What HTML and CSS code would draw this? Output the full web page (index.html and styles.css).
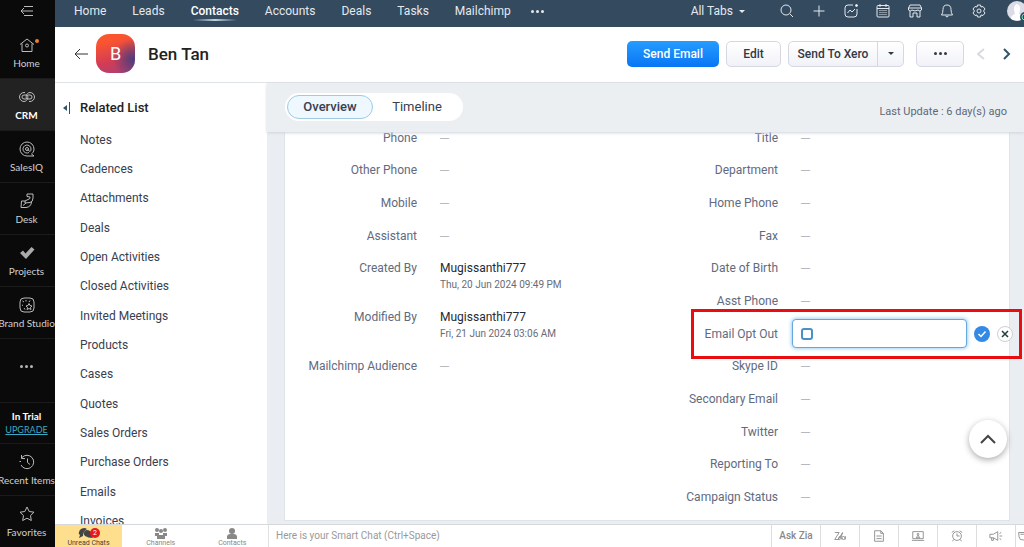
FILE: index.html
```
<!DOCTYPE html>
<html lang="en">
<head>
<meta charset="utf-8">
<title>Ben Tan - Contacts</title>
<link rel="stylesheet" href="styles.css">
</head>
<body>
<div class="app">
  <nav class="rail" aria-label="Applications">
    <button class="rail-toggle" aria-label="Collapse"><svg width="14" height="12" viewBox="0 0 14 12"><path d="M4 1.500H13M1 6H13M4 10.500H13M4 3L1 6L4 9"/></svg></button>
    <a class="rail-item" href="#"><svg width="18" height="18" viewBox="0 0 18 18"><path d="M2 8.500L9 3L16 8.500M4 7.500V15.500H14V7.500"/><circle cx="9" cy="9.500" r="1.500"/><circle class="orange" cx="19" cy="5" r="2"/></svg><span>Home</span></a>
    <a class="rail-item active" href="#"><svg width="18" height="18" viewBox="0 0 18 18"><path d="M7 4.500H6A4.500 4.500 0 0 0 6 13.500C8 13.500 9 12 10 10.500M11 13.500H12A4.500 4.500 0 0 0 12 4.500C10 4.500 9 6 8 7.500"/><rect x="4" y="7" width="6" height="4" rx="2"/><rect x="8" y="7" width="6" height="4" rx="2"/></svg><span>CRM</span></a>
    <a class="rail-item" href="#"><svg width="18" height="18" viewBox="0 0 18 18"><path d="M16 16H9A7 7 0 1 1 16 9C16 12 14.500 13 13.500 14L16 16M11 12.500A4 4 0 1 1 13 9C13 11 12 11.500 12 11.500L9.500 9.500"/><circle cx="9" cy="9" r="1.500"/></svg><span>SalesIQ</span></a>
    <a class="rail-item" href="#"><svg width="18" height="18" viewBox="0 0 18 18"><path d="M9 2H15V6Q15 10 12 10.500L7 11V9H3.500L3 15.500H8Q13 15 13.500 10M9 2V4.500L12 5Q12.500 7 10 7.500L7 9M5 13.500L8 11"/></svg><span>Desk</span></a>
    <a class="rail-item" href="#"><svg class="solid" width="18" height="18" viewBox="0 0 18 18"><path d="M2 9L5 6.500L7.500 9.500L13.500 3L16.500 5.500L8 15Z"/></svg><span>Projects</span></a>
    <a class="rail-item" href="#"><svg width="18" height="18" viewBox="0 0 18 18"><rect x="2" y="2" width="14" height="14" rx="4"/><path d="M4.500 5L6 6M8 4V5.500M12 4.500L11 6M4 9L5 9.500M6 12L7 13.500M11 7.500L12 9.500L14 10L12.500 11.500L13 13.500L11 12.500L9 13.500L9.500 11.500L8 10L10 9.500Z"/></svg><span>Brand Studio</span></a>
    <button class="rail-more" aria-label="More applications"><i></i><i></i><i></i></button>
    <div class="trial"><b>In Trial</b><a href="#">UPGRADE</a></div>
    <a class="rail-item" href="#"><svg width="18" height="18" viewBox="0 0 18 18"><path d="M4 4.500A6.700 6.700 0 1 1 3 12M3.500 2V5.500H7M9.500 5.500V9.500L12 11.500M1.500 8.500H3"/></svg><span>Recent Items</span></a>
    <a class="rail-item" href="#"><svg width="18" height="18" viewBox="0 0 18 18"><path d="M9 2L11.200 6.500L16 7.200L12.500 10.600L13.300 15.500L9 13.200L4.700 15.500L5.500 10.600L2 7.200L6.800 6.500Z"/></svg><span>Favorites</span></a>
  </nav>

  <div class="main">
    <header class="topbar">
      <nav class="tabs" aria-label="Modules">
        <a href="#">Home</a><a href="#">Leads</a><a class="current" href="#">Contacts</a><a href="#">Accounts</a><a href="#">Deals</a><a href="#">Tasks</a><a href="#">Mailchimp</a>
        <button class="dots" aria-label="More modules"><i></i><i></i><i></i></button>
      </nav>
      <div class="tools">
        <button class="all-tabs">All Tabs <i class="caret"></i></button>
        <button aria-label="Search"><svg viewBox="0 0 16 16"><circle cx="7" cy="7" r="5"/><path d="M11 11L14 14"/></svg></button>
        <button aria-label="Create"><svg viewBox="0 0 16 16"><path d="M8 2.500V13.500M2.500 8H13.500"/></svg></button>
        <button aria-label="Analytics"><svg viewBox="0 0 16 16"><path d="M10 2H5Q2 2 2 5V11Q2 14 5 14H11Q14 14 14 11V6M4.500 10L7 7L9 9L12 6"/><circle class="fill" cx="13.500" cy="2.500" r="1"/></svg></button>
        <button aria-label="Calendar"><svg viewBox="0 0 16 16"><rect x="2" y="2.500" width="12" height="11.500" rx="1"/><path d="M2 5.500H14M5 1V4M11 1V4"/><path class="grid-dots" d="M4.500 7.500H12M4.500 9.500H12M4.500 11.500H12"/></svg></button>
        <button aria-label="Marketplace"><svg viewBox="0 0 16 16"><path d="M3 2H13L14.500 5V7Q13 9 11 7Q8 9 5 7Q3 9 1.500 7V5ZM1.500 5H14.500M3 8V14H6V10H10V14H13V8"/></svg></button>
        <button aria-label="Notifications"><svg viewBox="0 0 16 16"><path d="M2.500 12Q4 10 4 6.500Q4 2 8 2Q12 2 12 6.500Q12 10 13.500 12ZM6.500 13Q8 15 9.500 13"/></svg></button>
        <button aria-label="Settings"><svg viewBox="0 0 16 16"><path d="M6.500 2H9.500L10 4L12 3.500L14 6L12.500 8L14 10L12 12.500L10 12L9.500 14H6.500L6 12L4 12.500L2 10L3.500 8L2 6L4 3.500L6 4Z"/><circle cx="8" cy="8" r="2"/></svg></button>
        <button class="profile" aria-label="Profile"><svg viewBox="0 0 20 20"><circle cx="10" cy="10" r="10" fill="#dcdce8"/><path d="M4 18Q4 14 8 13Q5 5 10 3Q15 5 12 13Q16 14 16 18Q10 21 4 18Z" fill="#fff"/><circle cx="18" cy="16" r="5" fill="#344a5e"/><circle cx="18" cy="16" r="3" fill="#18564d" stroke="#75ddb8"/></svg></button>
      </div>
    </header>

    <header class="record">
      <button class="back" aria-label="Back"><svg width="14" height="12" viewBox="0 0 14 12"><path d="M14 6H1M6 1L1 6L6 11"/></svg></button>
      <span class="avatar">B</span>
      <h1>Ben Tan</h1>
      <div class="actions">
        <button class="btn primary">Send Email</button>
        <button class="btn edit">Edit</button>
        <div class="split"><button>Send To Xero</button><button class="drop" aria-label="More send options"><i class="caret"></i></button></div>
        <button class="btn more" aria-label="More actions"><i></i><i></i><i></i></button>
      </div>
      <div class="pager">
        <button aria-label="Previous record" disabled><svg width="8" height="12" viewBox="0 0 8 12"><path d="M7 1L1 6L7 11"/></svg></button>
        <button aria-label="Next record"><svg width="8" height="12" viewBox="0 0 8 12"><path d="M1 1L6 6L1 11"/></svg></button>
      </div>
    </header>

    <div class="workspace">
      <aside class="related">
        <h2><svg width="8" height="14" viewBox="0 0 8 14"><path d="M0 7L4 4V10Z" fill="#31546d" stroke="none"/><path d="M6.500 1V13" stroke="#31546d"/></svg>Related List</h2>
        <a href="#">Notes</a><a href="#">Cadences</a><a href="#">Attachments</a><a href="#">Deals</a><a href="#">Open Activities</a><a href="#">Closed Activities</a><a href="#">Invited Meetings</a><a href="#">Products</a><a href="#">Cases</a><a href="#">Quotes</a><a href="#">Sales Orders</a><a href="#">Purchase Orders</a><a href="#">Emails</a><a href="#">Invoices</a>
      </aside>
      <main class="content">
        <div class="viewbar">
          <div class="switch"><button class="selected">Overview</button><button>Timeline</button></div>
          <p>Last Update : 6 day(s) ago</p>
        </div>
        <div class="scroll">
          <section class="card">
            <dl class="fields">
              <div><dt>Phone</dt><dd>—</dd></div>
              <div><dt>Other Phone</dt><dd>—</dd></div>
              <div><dt>Mobile</dt><dd>—</dd></div>
              <div><dt>Assistant</dt><dd>—</dd></div>
              <div class="tall"><dt>Created By</dt><dd class="value">Mugissanthi777<small>Thu, 20 Jun 2024 09:49 PM</small></dd></div>
              <div class="tall"><dt>Modified By</dt><dd class="value">Mugissanthi777<small>Fri, 21 Jun 2024 03:06 AM</small></dd></div>
              <div><dt>Mailchimp Audience</dt><dd>—</dd></div>
            </dl>
            <dl class="fields right">
              <div><dt>Title</dt><dd>—</dd></div>
              <div><dt>Department</dt><dd>—</dd></div>
              <div><dt>Home Phone</dt><dd>—</dd></div>
              <div><dt>Fax</dt><dd>—</dd></div>
              <div><dt>Date of Birth</dt><dd>—</dd></div>
              <div><dt>Asst Phone</dt><dd>—</dd></div>
              <div class="editing"><dt><label for="optout">Email Opt Out</label></dt><dd class="editor"><span class="box"><input type="checkbox" id="optout"></span><button class="save" aria-label="Save"><svg viewBox="0 0 16 16"><path d="M4.500 8L7 10.500L11.500 5.500"/></svg></button><button class="cancel" aria-label="Cancel"><svg viewBox="0 0 14 14"><path d="M4 4L10 10M10 4L4 10"/></svg></button></dd></div>
              <div><dt>Skype ID</dt><dd>—</dd></div>
              <div><dt>Secondary Email</dt><dd>—</dd></div>
              <div><dt>Twitter</dt><dd>—</dd></div>
              <div><dt>Reporting To</dt><dd>—</dd></div>
              <div><dt>Campaign Status</dt><dd>—</dd></div>
            </dl>
          </section>
          <button class="to-top" aria-label="Back to top"><svg width="18" height="10" viewBox="0 0 18 10"><path d="M2 9L9 2L16 9"/></svg></button>
        </div>
      </main>
    </div>

    <footer class="chatbar">
      <div class="chat-tabs">
        <button class="unread"><svg width="18" height="12" viewBox="0 0 18 12"><path d="M8 1Q3 1 2 5Q1 7 3 8L2 11L6 9Q6 4 10 2ZM9 3Q5 6 8 9Q11 11 16 11L14 8Q15 3 9 3Z"/></svg><span class="badge">2</span><span>Unread Chats</span></button>
        <button><svg width="14" height="12" viewBox="0 0 14 12"><circle cx="3" cy="3" r="2"/><circle cx="11" cy="3" r="2"/><circle cx="7" cy="4" r="2"/><path d="M1 9V6H5V8H9V6H13V9H11V12H3V9Z"/></svg><span>Channels</span></button>
        <button><svg width="14" height="12" viewBox="0 0 14 12"><circle cx="7" cy="4" r="3"/><path d="M2 12V9Q3 7 5 7H9Q11 7 12 9V12Z"/></svg><span>Contacts</span></button>
      </div>
      <input class="smart" type="text" aria-label="Smart Chat" placeholder="Here is your Smart Chat (Ctrl+Space)">
      <div class="chat-tools">
        <button class="zia">Ask Zia</button>
        <button aria-label="Zia"><svg viewBox="0 0 16 16"><path d="M2 4H7L2 12H6L11 4L9 10M6 12Q7 7 9 9Q9 13 6 12M10 12Q10 7 13 9Q15 12 12 12Q10 12 10 10M14 8L14 12"/></svg></button>
        <button aria-label="Notes"><svg viewBox="0 0 16 16"><path d="M3 2H10L13 5V14H3ZM10 2V5H13M5 8H11M5 11H11"/></svg></button>
        <button aria-label="Screen share"><svg viewBox="0 0 16 16"><path d="M2 3H14V11H2ZM1 13H15"/><circle cx="8" cy="6" r="1"/><path d="M6 10L8 7L10 10Z"/></svg></button>
        <button aria-label="Reminders"><svg viewBox="0 0 16 16"><circle cx="8" cy="8" r="5"/><path d="M8 5V8H11M2 4L5 2M14 4L11 2M4 12L3 14M12 12L13 14"/></svg></button>
        <button aria-label="Announcements"><svg viewBox="0 0 16 16"><path d="M1 6H5L10 3V13L5 10H1ZM3 10V13H5V10M12 5L14 4M12 8H15M12 11L14 12"/></svg></button>
        <button class="last" aria-label="Chat"><svg viewBox="0 0 16 16"><path d="M3 4H12V10Q9 14 5 12Q3 10 3 4M5 6H9"/></svg></button>
      </div>
    </footer>
  </div>
</div>
</body>
</html>
```
FILE: styles.css
```
* { box-sizing: border-box; }
body { margin: 0; font: 12px/16px Roboto, "Noto Sans", sans-serif; color: #38404f; }
button { padding: 0; border: 0; background: none; color: inherit; font: inherit; }
a { color: inherit; text-decoration: none; }
svg { display: block; fill: none; stroke: currentColor; stroke-width: 1; }
h1, h2, p, dl, dd { margin: 0; }
.app { display: flex; height: 100vh; overflow: hidden; }
.main { display: flex; flex: 1; min-width: 0; flex-direction: column; }

.rail { display: flex; flex: none; width: 55px; flex-direction: column; overflow: hidden; background: #0a0a0a; color: #b5b5b5; font-family: Lato, Roboto, sans-serif; font-size: 10px; line-height: 12px; }
.rail > * { padding-right: 2px; }
.rail-toggle { display: grid; flex: none; height: 27px; padding-bottom: 6px; place-items: center; }
.rail-item { display: flex; flex: none; height: 52px; padding-top: 9px; flex-direction: column; align-items: center; gap: 3px; border-bottom: 1px solid #1b1b1b; white-space: nowrap; color: #d0d0d0; }
.rail-item.active { background: #222; color: #fff; font-weight: 700; }
.rail-item .orange { fill: #ed7e2c; stroke: none; }
.rail-item .solid { fill: #aaa; stroke: none; }
.rail svg { overflow: visible; color: #bbb; }
.rail-more { display: flex; flex: none; height: 64px; padding-bottom: 8px; align-items: center; justify-content: center; gap: 2px; border-bottom: 1px solid #1b1b1b; }
.rail-more i, .dots i, .more i { width: 3px; height: 3px; border-radius: 50%; background: currentColor; }
.trial { display: flex; flex: none; height: 41px; flex-direction: column; align-items: center; justify-content: center; gap: 2px; border-bottom: 1px solid #1b1b1b; color: #fff; }
.trial b { font-weight: 700; }
.trial a { color: #3ba9c4; font-size: 9px; text-decoration: underline; }

.topbar { display: flex; flex: none; height: 27px; padding-bottom: 5px; align-items: center; justify-content: space-between; background: #344a5e; color: #e3e9ef; }
.tabs { display: flex; padding-left: 19px; align-items: center; gap: 26px; }
.current { position: relative; color: #fff; font-weight: 500; }
.current::after { position: absolute; right: 2px; bottom: -2px; left: 2px; height: 2px; background: linear-gradient(90deg, transparent, #bfd5e0, transparent); content: ""; }
.dots { display: flex; gap: 2px; }
.tabs .dots { margin-left: -6px; }
.tools { display: flex; align-items: center; gap: 16px; }
.tools svg { width: 16px; height: 16px; }
.tools .fill { fill: #fff; }
.grid-dots { stroke-dasharray: 1 1; }
.all-tabs { display: flex; margin-right: 18px; align-items: center; gap: 6px; }
.caret { border: 3px solid transparent; border-top: 3px solid currentColor; border-bottom: 0; }
.tools .profile { width: 17px; margin-left: 4px; overflow: hidden; }
.tools .profile svg { width: 20px; height: 20px; stroke: none; }

.record { display: flex; flex: none; height: 56px; padding: 0 13px 2px 19px; align-items: center; border-bottom: 1px solid #dfe3e8; background: #fff; }
.back svg { stroke: #333; }
.avatar { display: grid; width: 39px; height: 39px; margin: 0 13px 0 8px; place-items: center; border-radius: 13px; background: radial-gradient(circle at 95% 65%, #4c3d7b, transparent 45%), linear-gradient(165deg, #fb5530 20%, #d13c55 65%, #a64279); color: #fff; font-size: 18px; }
.record h1 { color: #222; font-size: 17px; font-weight: 500; }
.actions { display: flex; margin-left: auto; align-items: center; gap: 7px; font-weight: 500; }
.btn, .split { height: 26px; border: 1px solid #d5d8e2; border-radius: 5px; background: linear-gradient(#fff, #f1f2f8); color: #343843; }
.primary { width: 92px; border: 0; background: linear-gradient(#259dff, #0875f5); color: #fff; }
.edit { width: 55px; }
.split { display: flex; width: 116px; }
.split button { flex: 1; white-space: nowrap; }
.split .drop { display: grid; flex: 0 0 26px; place-items: center; border-left: 1px solid #d5d8e2; }
.more { display: flex; width: 48px; margin-left: 5px; align-items: center; justify-content: center; gap: 2px; }
.pager { display: flex; margin-left: 13px; gap: 18px; }
.pager svg { stroke: #31546d; stroke-width: 2; }
.pager :disabled svg { stroke: #d5dbe0; }

.workspace { display: flex; flex: 1; min-height: 0; }
.related { flex: none; width: 212px; padding: 17px 7px 0 8px; overflow: hidden; }
.related h2 { display: flex; margin-bottom: 10px; align-items: center; gap: 9px; color: #222; font-size: 13px; font-weight: 500; line-height: 16px; }
.related a { display: block; padding-left: 17px; line-height: 29px; }
.related a:nth-of-type(3n) { margin-bottom: 1px; }
.content { display: flex; flex: 1; min-width: 0; flex-direction: column; background: #eaeef2; }
.viewbar { display: flex; z-index: 1; flex: none; height: 49px; padding: 0 17px 2px 18px; align-items: center; justify-content: space-between; box-shadow: 0 1px 3px #cdd2dc; background: #ebeff2; }
.switch { display: flex; height: 28px; padding: 2px; border-radius: 14px; background: #fff; font-size: 13px; }
.switch button { width: 88px; border-radius: 12px; }
.switch .selected { width: 86px; border: 1px solid #9dcce0; background: #eff7ff; font-weight: 500; }
.viewbar p { padding-top: 10px; color: #616779; font-size: 11px; }
.scroll { position: relative; flex: 1; min-height: 0; padding: 0 14px 3px 17px; }
.card { display: grid; height: 100%; grid-template-columns: 361px 1fr; border: 1px solid #dfe4ea; border-top: 0; background: #fff; }
.fields { padding-top: 5px; margin-top: -7px; }
.fields > div { display: grid; min-height: 33px; grid-template-columns: 132px 1fr; column-gap: 23px; align-items: start; }
.fields > div:nth-child(3n + 1) { min-height: 32px; }
.fields > .tall { min-height: 49px; }
dt { text-align: right; white-space: nowrap; color: #626a80; }
dd { color: #a4a8af; font-family: Inter, sans-serif; font-size: 9px; }
.value { color: #252a32; font-family: Roboto, sans-serif; font-size: 12px; }
small { display: block; color: #686c78; font-size: 10px; line-height: 18px; }
.fields > .editing { position: relative; height: 32px; }
.editing::before { position: absolute; top: -17px; right: -13px; bottom: -1px; left: 45px; border: 3px solid #e90d10; content: ""; }
.editor { display: flex; margin: -7px -4px 0 -9px; align-items: center; gap: 7px; }
.box { display: flex; flex: 1; height: 29px; padding-left: 8px; align-items: center; border: 1px solid #66a8dc; border-radius: 4px; box-shadow: 0 0 4px #73b7ee; background: #fff; }
.box input { width: 12px; height: 12px; margin: 0; border: 2px solid #4b91c6; border-radius: 3px; appearance: none; }
.save, .cancel { width: 16px; height: 16px; border-radius: 50%; }
.save { background: #338ae5; color: #fff; }
.cancel { border: 1px solid #ccd0d3; background: #fff; color: #223f3b; }
.save svg, .cancel svg { stroke-width: 1.5; }
.to-top { position: absolute; right: 17px; bottom: 66px; display: grid; width: 38px; height: 38px; place-items: center; border-radius: 50%; box-shadow: 0 2px 6px #aaa; background: #fff; }
.to-top svg { stroke: #444; stroke-width: 2; }

.chatbar { display: flex; flex: none; height: 23px; border-top: 1px solid #d6d9dc; background: #fff; color: #888; }
.chat-tabs { display: flex; flex: none; width: 214px; border-right: 1px solid #e0e0e0; font-size: 7px; line-height: 8px; }
.chat-tabs button { position: relative; display: flex; flex: 1; flex-direction: column; align-items: center; justify-content: flex-end; }
.chat-tabs .unread { flex: 0 0 67px; margin-right: 3px; background: #fedf8e; color: #444; }
.chat-tabs svg { fill: currentColor; stroke: none; }
.chat-tabs .unread svg { margin-right: 6px; }
.badge { position: absolute; top: 3px; right: 22px; width: 10px; height: 10px; border-radius: 50%; background: #e71723; color: #fff; line-height: 10px; }
.smart { flex: 1; min-width: 0; padding: 0 7px; border: 0; background: none; font: 10px/16px Roboto, "Noto Sans", sans-serif; }
.smart::placeholder { color: #999; }
.chat-tools { display: flex; flex: none; }
.chat-tools button { display: grid; width: 39px; place-items: center; border-left: 1px solid #ddd; }
.chat-tools .zia { width: 49px; font-size: 10px; font-weight: 500; }
.chat-tools svg { width: 14px; height: 14px; }
.chat-tools .last { width: 9px; overflow: hidden; justify-items: start; }
```
